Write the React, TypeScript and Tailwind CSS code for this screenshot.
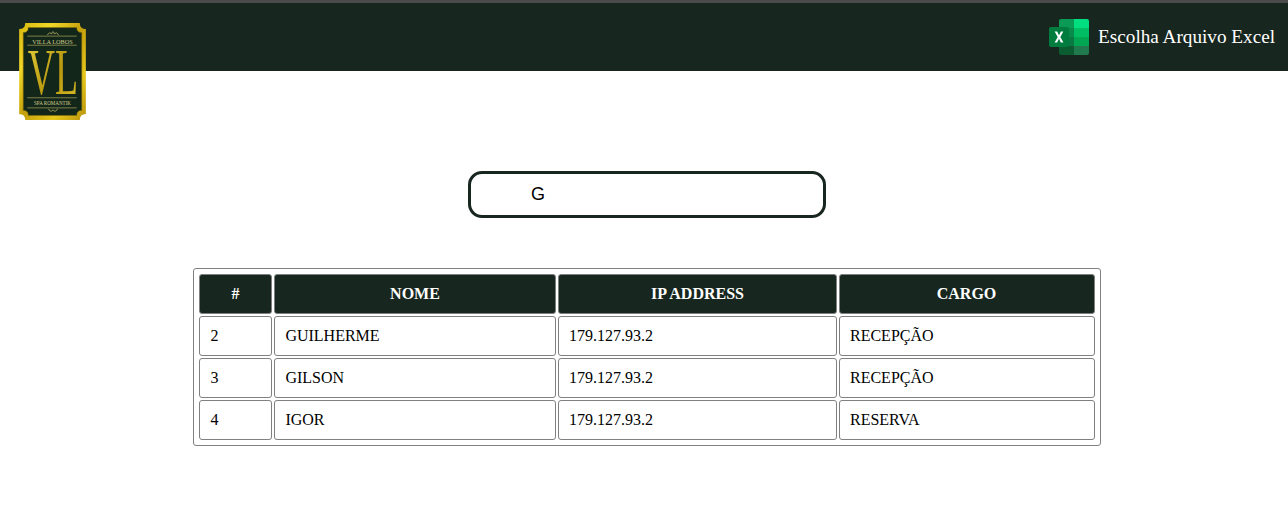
import React from 'react';

const rows = [
  { id: 2, nome: 'GUILHERME', ip: '179.127.93.2', cargo: 'RECEPÇÃO' },
  { id: 3, nome: 'GILSON', ip: '179.127.93.2', cargo: 'RECEPÇÃO' },
  { id: 4, nome: 'IGOR', ip: '179.127.93.2', cargo: 'RESERVA' },
];

const Logo = () => (
  <svg width="67" height="97" viewBox="1 1 66 96" className="absolute left-[19px] top-[23px]">
    <defs>
      <linearGradient id="gold" x1="0" y1="0" x2="1" y2="1">
        <stop offset="0" stopColor="#d8b80f" />
        <stop offset="0.25" stopColor="#f0d828" />
        <stop offset="0.5" stopColor="#c49f0c" />
        <stop offset="0.75" stopColor="#e6c81c" />
        <stop offset="1" stopColor="#b8930c" />
      </linearGradient>
      <linearGradient id="vl" x1="0" y1="0" x2="1" y2="1">
        <stop offset="0" stopColor="#e8d23a" />
        <stop offset="0.55" stopColor="#b8980f" />
        <stop offset="1" stopColor="#dcc22a" />
      </linearGradient>
    </defs>
    <path d="M7 1H61Q61 7 67 7V91Q61 91 61 97H7Q7 91 1 91V7Q7 7 7 1Z" fill="url(#gold)" />
    <path d="M10 5.5H58Q58 10.5 63 10.5V87.5Q58 87.5 58 92.5H10Q10 87.5 5 87.5V10.5Q10 10.5 10 5.5Z" fill="#13261a" stroke="#8a7008" strokeWidth="0.6" />
    <path d="M9 14H58M9 23H58M9 75H58M9 85H58" stroke="#a8a35a" strokeWidth="0.7" />
    <path d="M29 13Q31 9 33 12Q34.5 7 36 12Q38 9 40 13M30 86Q32 90 34.5 87Q37 90 39 86" stroke="#a8a35a" strokeWidth="0.9" fill="none" />
    <text x="34" y="21.5" textAnchor="middle" fontFamily="Liberation Serif" fontSize="6.2" fill="#cfc98a">VILLA LOBOS</text>
    <text transform="translate(34.5 71) scale(0.575 1)" textAnchor="middle" fontFamily="Liberation Serif" fontSize="65" fill="url(#vl)">VL</text>
    <text x="34" y="82.5" textAnchor="middle" fontFamily="Liberation Serif" fontSize="5" fill="#cfc98a">SPA ROMANTIK</text>
  </svg>
);

const ExcelIcon = () => (
  <svg width="40" height="36" viewBox="0 0 40 36">
    <path d="M12 0H25V9H10V2Q10 0 12 0Z" fill="#0a9a55" />
    <path d="M25 0H38Q40 0 40 2V9H25Z" fill="#00de80" />
    <rect x="10" y="9" width="15" height="9" fill="#0a8a4a" />
    <rect x="25" y="9" width="15" height="9" fill="#00bd64" />
    <rect x="10" y="18" width="15" height="9" fill="#0a7a42" />
    <rect x="25" y="18" width="15" height="9" fill="#00a651" />
    <path d="M10 27H25V36H12Q10 36 10 34Z" fill="#0b5c30" />
    <path d="M25 27H40V34Q40 36 38 36H25Z" fill="#217a4d" />
    <rect x="0" y="8" width="20" height="20" rx="2" fill="#007c3f" />
    <path d="M5.6 12.5H8.2L10 16.2L11.9 12.5H14.3L11.4 18L14.4 23.5H11.8L10 19.8L8.1 23.5H5.6L8.7 18Z" fill="#ffffff" />
  </svg>
);

export default function App() {
  return (
    <div className="relative min-h-[518px] bg-white font-['Liberation_Serif',serif] text-black">
      <header className="flex h-[71px] items-center justify-end gap-[9px] border-t-[3px] border-[#4b4b4b] bg-[#17261e] pr-[13px] text-[19.2px] text-white">
        <ExcelIcon />
        <span>Escolha Arquivo Excel</span>
      </header>
      <Logo />

      <main className="flex flex-col items-center pl-[6px]">
        <input
          readOnly
          value="G"
          className="mt-[100px] h-[47px] w-[358px] rounded-[14px] border-[3px] border-[#17261e] bg-white pl-[60px] font-['Liberation_Sans',sans-serif] text-[18px] text-black outline-none"
        />
        <div className="mt-[50px] w-[908px] rounded-[3px] border border-[#808080] p-[3px]">
          <table className="w-full table-fixed border-separate border-spacing-[2px] text-[16px]">
            <colgroup>
              <col className="w-[73px]" />
              <col className="w-[282px]" />
              <col className="w-[279px]" />
              <col className="w-[256px]" />
            </colgroup>
            <thead>
              <tr className="h-[40px]">
                <th className="rounded-[3px] border border-[#808080] bg-[#17261e] text-center font-bold text-white">#</th>
                <th className="rounded-[3px] border border-[#808080] bg-[#17261e] text-center font-bold text-white">NOME</th>
                <th className="rounded-[3px] border border-[#808080] bg-[#17261e] text-center font-bold text-white">IP ADDRESS</th>
                <th className="rounded-[3px] border border-[#808080] bg-[#17261e] pr-[1px] text-center font-bold text-white">CARGO</th>
              </tr>
            </thead>
            <tbody>
              {rows.map((r) => (
                <tr key={r.id} className="h-[40px]">
                  <td className="rounded-[3px] border border-[#808080] px-[10.4px]">{r.id}</td>
                  <td className="rounded-[3px] border border-[#808080] px-[10.4px]">{r.nome}</td>
                  <td className="rounded-[3px] border border-[#808080] px-[10px]">{r.ip}</td>
                  <td className="rounded-[3px] border border-[#808080] px-[10px]">{r.cargo}</td>
                </tr>
              ))}
            </tbody>
          </table>
        </div>
      </main>
    </div>
  );
}
